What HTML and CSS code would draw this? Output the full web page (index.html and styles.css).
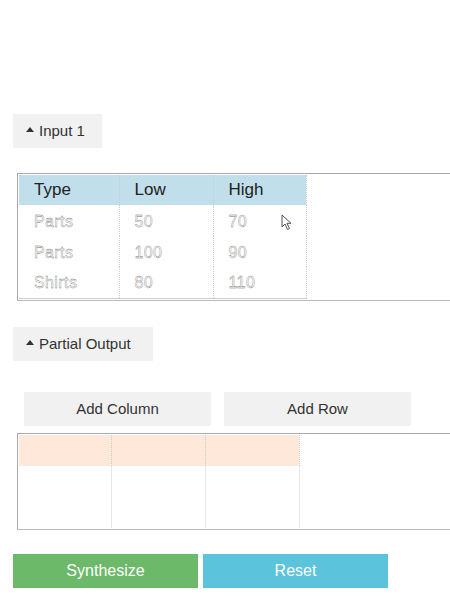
FILE: index.html
```html
<!DOCTYPE html>
<html>
<head>
<meta charset="utf-8">
<link rel="stylesheet" href="styles.css">
</head>
<body>
<div class="page">
  <div class="toggle toggle-input"><span class="tri"></span>Input 1</div>
  <div class="grid-wrap grid-input">
    <table class="grid">
      <tr class="head blue">
        <td class="c1">Type</td><td class="c2">Low</td><td class="c3">High</td>
      </tr>
      <tr class="body"><td>Parts</td><td>50</td><td>70</td></tr>
      <tr class="body"><td>Parts</td><td>100</td><td>90</td></tr>
      <tr class="body"><td>Shirts</td><td>80</td><td>110</td></tr>
    </table>
    <svg class="cursor" width="12" height="18" viewBox="0 0 12 18"><path d="M1 1 L1 13 L4 10 L6.5 15.5 L8.5 14.5 L6 9.3 L10 9.3 Z" fill="#fff" stroke="#555" stroke-width="1" stroke-linejoin="round"/></svg>
  </div>
  <div class="toggle toggle-output"><span class="tri"></span>Partial Output</div>
  <div class="actions">
    <div class="btn-light">Add Column</div>
    <div class="btn-light">Add Row</div>
  </div>
  <div class="grid-wrap grid-output">
    <table class="grid out">
      <tr class="head peach"><td class="o1"></td><td class="o2"></td><td class="o3"></td></tr>
      <tr class="obody"><td></td><td></td><td></td></tr>
      <tr class="obody"><td></td><td></td><td></td></tr>
    </table>
  </div>
  <div class="footer">
    <div class="btn synth">Synthesize</div>
    <div class="btn reset">Reset</div>
  </div>
</div>
</body>
</html>
```
FILE: styles.css
```css
html, body {
  margin: 0;
  padding: 0;
  background: #fff;
}
body {
  font-family: "Liberation Sans", Arial, sans-serif;
  color: #333;
  width: 450px;
  height: 600px;
  overflow: hidden;
}
.page {
  display: flex;
  flex-direction: column;
  align-items: flex-start;
  padding-top: 114px;
}
.toggle {
  margin-left: 13px;
  height: 34px;
  line-height: 34px;
  background: #f1f1f1;
  font-size: 15px;
  color: #333;
  padding: 0 0 0 13px;
  box-sizing: border-box;
}
.tri {
  display: inline-block;
  width: 0;
  height: 0;
  border-left: 4px solid transparent;
  border-right: 4px solid transparent;
  border-bottom: 5px solid #333;
  vertical-align: 4px;
  margin-right: 5px;
}
.toggle-input { width: 89px; }
.toggle-output { width: 140px; margin-top: 26px; }
.grid-wrap {
  margin-left: 17px;
  width: 450px;
  border: 1px solid #aaa;
  border-right: none;
  padding: 1px 0 1px 1px;
  box-sizing: border-box;
  position: relative;
  border-bottom: 1px solid #bbb;
}
.grid-input { margin-top: 25px; }
.grid-output { margin-top: 7px; }
.grid {
  border-collapse: collapse;
  border-spacing: 0;
  border-bottom: 1px solid #ccc;
}
.grid td {
  padding: 0 0 0 15px;
  box-sizing: border-box;
  border-left: 1px dotted #ccc;
}
.grid td:first-child { border-left: none; }
.grid td:last-child { border-right: 1px dotted #ccc; }
.head td {
  height: 30px;
  font-size: 17px;
  color: #222;
}
.blue td { background: #c0dfea; }
.c1 { width: 100px; }
.c2 { width: 94px; }
.c3 { width: 93px; }
.body td {
  height: 31px;
  padding-top: 2px;
  font-size: 16px;
  color: #fff;
  -webkit-text-stroke: 0.35px #6f6f6f;
  letter-spacing: 0.4px;
}
.peach td { background: #fde8d9; height: 31px; }
.o1 { width: 92px; }
.o2 { width: 94px; }
.o3 { width: 94px; }
.obody td { height: 31px; border-left: 1px solid #e6e6e6; }
.obody td:last-child { border-right: 1px solid #e6e6e6; }
.out { border-bottom: none; }
.cursor {
  position: absolute;
  left: 263px;
  top: 40px;
}
.actions {
  display: flex;
  gap: 13px;
  margin-top: 31px;
  margin-left: 24px;
}
.btn-light {
  width: 187px;
  height: 34px;
  line-height: 34px;
  text-align: center;
  background: #f1f1f1;
  font-size: 15px;
  color: #333;
}
.footer {
  display: flex;
  gap: 5px;
  margin-top: 24px;
  margin-left: 13px;
}
.btn {
  width: 185px;
  height: 34px;
  line-height: 34px;
  text-align: center;
  color: #fff;
  font-size: 16px;
}
.synth { background: #6cb96a; }
.reset { background: #5bc3dc; }
```
